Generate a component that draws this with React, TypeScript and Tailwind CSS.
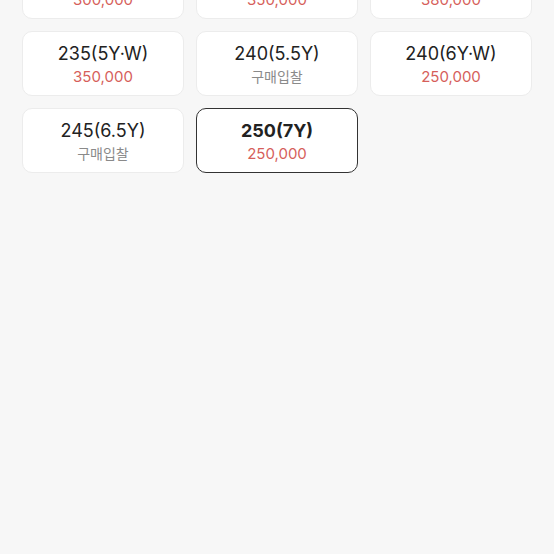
const sizes = [
  { name: "230(4.5Y)", price: "300,000" },
  { name: "230(5Y·W)", price: "350,000" },
  { name: "235(5Y)", price: "380,000" },
  { name: "235(5Y·W)", price: "350,000" },
  { name: "240(5.5Y)", price: null },
  { name: "240(6Y·W)", price: "250,000" },
  { name: "245(6.5Y)", price: null },
  { name: "250(7Y)", price: "250,000", selected: true },
]

function App() {
  return (
    <div
      className="w-[554px] h-[554px] overflow-hidden bg-[#f7f7f7]"
      style={{ fontFamily: 'Inter, "Noto Sans CJK KR", sans-serif' }}
    >
      <div className="grid grid-cols-3 gap-x-3 gap-y-3 px-[22px] -mt-[46px]">
        {sizes.map((s) => (
          <div
            key={s.name}
            className={`h-[65px] rounded-[10px] bg-white flex flex-col items-center justify-center pt-[2px] ${
              s.selected ? "border-[1.5px] border-[#333333]" : "border border-[#ececec]"
            }`}
          >
            <div
              className={`text-[18px] leading-[22px] text-[#222222] ${
                s.selected ? "font-bold" : "font-normal"
              }`}
            >
              {s.name}
            </div>
            {s.price ? (
              <div className="text-[15px] leading-[20px] mt-[2px] text-[#d65f5b]">{s.price}</div>
            ) : (
              <div className="text-[14px] leading-[20px] mt-[2px] text-[#8a8a8a]">구매입찰</div>
            )}
          </div>
        ))}
      </div>
    </div>
  )
}

export default App
